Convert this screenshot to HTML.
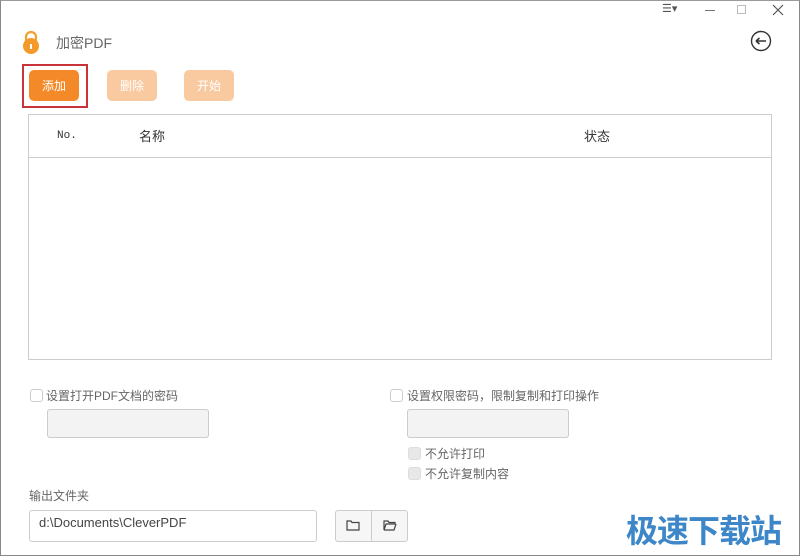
<!DOCTYPE html>
<html><head><meta charset="utf-8"><style>
*{box-sizing:border-box;margin:0;padding:0}
body{width:800px;height:556px;background:#fff;font-family:"Liberation Sans","Noto Sans CJK SC",sans-serif;position:relative;overflow:hidden;color:#555}
.frame{position:absolute;left:0;top:0;width:800px;height:556px;border:1px solid #888;border-top-color:#999}
.abs{position:absolute}
.btn{position:absolute;top:70px;width:50px;height:31px;border-radius:5px;color:#fff;font-size:12px;text-align:center;line-height:32px}
.cb{position:absolute;width:13px;height:13px;border:1px solid #ccc;border-radius:3px;background:#fff}
.cbg{background:#e8e8e8;border-color:#ddd}
.inp{position:absolute;border:1px solid #ccc;border-radius:3px;background:#f3f3f3}
.t{position:absolute;font-size:12px;color:#666;white-space:nowrap}
</style></head><body>
<div class="frame"></div>
<div class="t" style="left:662px;top:2px;font-size:11px;color:#555">☰▾</div>
<div class="abs" style="left:705px;top:10px;width:10px;height:1px;background:#777"></div>
<div class="abs" style="left:737px;top:5px;width:9px;height:9px;border:1px solid #bbb"></div>
<svg class="abs" style="left:772px;top:4px" width="12" height="12"><path d="M1 1L11 11M11 1L1 11" stroke="#555" stroke-width="1.2"/></svg>
<svg class="abs" style="left:21px;top:30px" width="20" height="25"><path d="M5 11V7a5 5 0 0 1 10 0v4" fill="none" stroke="#f0a030" stroke-width="2.2"/><circle cx="10" cy="16" r="8" fill="#f39a2a"/><rect x="9" y="14" width="2" height="5" fill="#fff"/></svg>
<div class="t" style="left:56px;top:33px;font-size:14px;color:#666">加密PDF</div>
<svg class="abs" style="left:750px;top:30px" width="22" height="22"><circle cx="11" cy="11" r="9.5" fill="none" stroke="#333" stroke-width="1.4"/><path d="M6 11H16M6 11l3.5-3M6 11l3.5 3" fill="none" stroke="#333" stroke-width="1.6"/></svg>
<div class="abs" style="left:22px;top:64px;width:66px;height:44px;border:2px solid #c8343a"></div>
<div class="btn" style="left:29px;background:#f4892a">添加</div>
<div class="btn" style="left:107px;background:#f9c9a0">删除</div>
<div class="btn" style="left:184px;background:#f9c9a0">开始</div>
<div class="abs" style="left:28px;top:114px;width:744px;height:246px;border:1px solid #ccc"></div>
<div class="abs" style="left:29px;top:157px;width:742px;height:1px;background:#ccc"></div>
<div class="t" style="left:57px;top:130px;font-family:'Liberation Mono',monospace;font-size:11px;color:#333">No.</div>
<div class="t" style="left:139px;top:126px;font-size:13px;color:#333">名称</div>
<div class="t" style="left:584px;top:126px;font-size:13px;color:#333">状态</div>
<div class="cb" style="left:30px;top:389px"></div>
<div class="t" style="left:46px;top:387px">设置打开PDF文档的密码</div>
<div class="inp" style="left:47px;top:409px;width:162px;height:29px"></div>
<div class="cb" style="left:390px;top:389px"></div>
<div class="t" style="left:407px;top:387px">设置权限密码，限制复制和打印操作</div>
<div class="inp" style="left:407px;top:409px;width:162px;height:29px"></div>
<div class="cb cbg" style="left:408px;top:447px"></div>
<div class="t" style="left:425px;top:445px">不允许打印</div>
<div class="cb cbg" style="left:408px;top:467px"></div>
<div class="t" style="left:425px;top:465px">不允许复制内容</div>
<div class="t" style="left:29px;top:487px">输出文件夹</div>
<div class="abs" style="left:29px;top:510px;width:288px;height:32px;border:1px solid #ccc;border-radius:3px"></div>
<div class="t" style="left:39px;top:515px;font-size:13px;color:#444">d:\Documents\CleverPDF</div>
<div class="abs" style="left:335px;top:510px;width:73px;height:32px;border:1px solid #ccc;border-radius:3px;background:#f6f6f6"></div>
<div class="abs" style="left:371px;top:510px;width:1px;height:32px;background:#ccc"></div>
<svg class="abs" style="left:346px;top:520px" width="14" height="11"><path d="M1 1H5L6 2.5H13V10H1Z" fill="none" stroke="#444" stroke-width="1.2"/></svg>
<svg class="abs" style="left:383px;top:520px" width="14" height="11"><path d="M1 1H5L6 2.5H12V4H3L1 10ZM1 10H11L13 4" fill="none" stroke="#444" stroke-width="1.2"/></svg>
<div class="t" style="left:626px;top:506px;font-size:32px;font-weight:bold;color:#3d86c8;letter-spacing:-1px">极速下载站</div>
</body></html>
